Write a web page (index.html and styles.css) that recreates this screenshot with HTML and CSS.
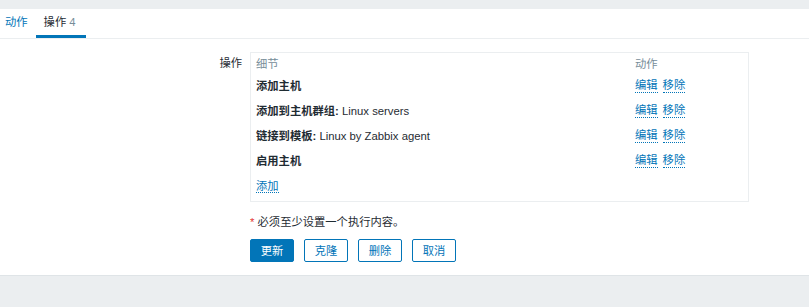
FILE: index.html
```html
<!DOCTYPE html>
<html lang="zh-CN">
<head>
  <meta charset="UTF-8">
  <title>操作</title>
  <link rel="stylesheet" href="styles.css">
</head>
<body>
  <div class="top-strip"></div>
  <div class="page">
    <nav class="tabs">
      <a class="tab" href="#">动作</a>
      <a class="tab active" href="#"><span>操作</span><span class="count">4</span></a>
    </nav>
    <form class="form">
      <div class="form-row">
        <label class="form-label">操作</label>
        <div class="ops-box">
          <div class="ops-head">
            <span>细节</span>
            <span>动作</span>
          </div>
          <div class="ops-row">
            <span><b>添加主机</b></span>
            <span class="acts"><a class="link" href="#">编辑</a><a class="link" href="#">移除</a></span>
          </div>
          <div class="ops-row">
            <span><b>添加到主机群组:</b> Linux servers</span>
            <span class="acts"><a class="link" href="#">编辑</a><a class="link" href="#">移除</a></span>
          </div>
          <div class="ops-row">
            <span><b>链接到模板:</b> Linux by Zabbix agent</span>
            <span class="acts"><a class="link" href="#">编辑</a><a class="link" href="#">移除</a></span>
          </div>
          <div class="ops-row">
            <span><b>启用主机</b></span>
            <span class="acts"><a class="link" href="#">编辑</a><a class="link" href="#">移除</a></span>
          </div>
          <div class="ops-row">
            <span><a class="link" href="#">添加</a></span>
          </div>
        </div>
      </div>
      <div class="form-foot">
        <p class="note"><span class="req">*</span> 必须至少设置一个执行内容。</p>
        <div class="buttons">
          <button type="button" class="btn primary">更新</button>
          <button type="button" class="btn">克隆</button>
          <button type="button" class="btn">删除</button>
          <button type="button" class="btn">取消</button>
        </div>
      </div>
    </form>
  </div>
</body>
</html>
```

FILE: styles.css
```css
:root { --blue: #0275b8; --text: #1f2c33; --muted: #768d99; --gray: #ebeef0; --line: #ebeef0; }
body { margin:0; height:307px; background: var(--gray); font-family: "Liberation Sans", Arial, "Noto Sans CJK SC", sans-serif; font-size:11.3px; color: var(--text); line-height:14px; overflow:hidden; }
.top-strip { height:9px; }
.page { background:#fff; height:266px; border-bottom:1px solid #dfe4e7; }
.tabs { display:flex; height:29px; margin-left:-3px; border-bottom:1px solid var(--line); }
.tab { display:flex; align-items:center; padding:0 8px; color: var(--blue); text-decoration:none; border-bottom:3px solid transparent; }
.tab.active { color: var(--text); border-bottom-color: var(--blue); padding:0 10px 0 8px; }
.count { color: var(--muted); margin-left:3px; }
.form { padding-top:13px; }
.form-row { display:flex; gap:8px; }
.form-label { width:242px; text-align:right; padding-top:4px; }
.ops-box { width:486px; border:1px solid var(--line); padding:2px 6px 3px 5px; }
.ops-head, .ops-row { display:grid; grid-template-columns: 379px 1fr; align-items:center; }
.ops-head { height:18px; color: var(--muted); }
.ops-row { height:25px; }
.acts { display:flex; gap:5px; }
.link { color: var(--blue); text-decoration:none; border-bottom:1px dotted var(--blue); }
.form-foot { margin-left:250px; }
.note { margin:13px 0 10px; }
.req { color:#e33734; }
.buttons { display:flex; gap:10px; }
.btn { width:44px; height:23px; padding:0; font:inherit; color: var(--blue); background:#fff; border:1px solid var(--blue); border-radius:2px; cursor:pointer; }
.btn.primary { background: var(--blue); color:#fff; }
```
